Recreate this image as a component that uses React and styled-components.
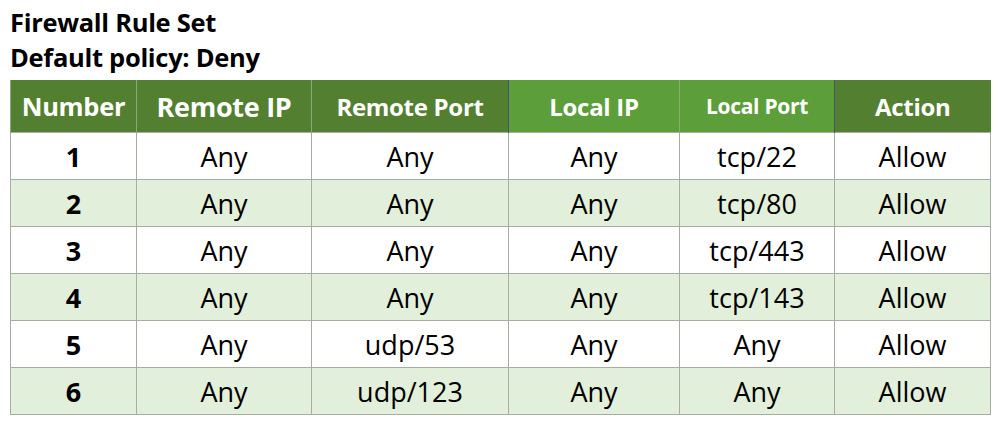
import React from 'react';
import styled, { createGlobalStyle } from 'styled-components';

const GlobalStyle = createGlobalStyle`
  body {
    margin: 0;
    background: #ffffff;
    font-family: "Open Sans", "Liberation Sans", sans-serif;
  }
`;

const Page = styled.div`
  width: 1000px;
  height: 425px;
  padding: 5px 10px 0 10px;
  box-sizing: border-box;
`;

const Title = styled.h1`
  margin: 0;
  font-size: 25.5px;
  line-height: 35px;
  font-weight: 700;
  color: #000;
  letter-spacing: -0.3px;
`;

const RuleTable = styled.table`
  margin-top: 5px;
  width: 980px;
  border-collapse: collapse;
  table-layout: fixed;
`;

const HeadCell = styled.th`
  height: 52px;
  padding: 0;
  background: ${(p) => (p.$light ? '#5c9e3a' : '#537f30')};
  color: #ffffff;
  font-size: ${(p) => p.$size || 23}px;
  font-weight: 700;
  letter-spacing: -0.3px;
  text-align: center;
  border-left: 1px solid ${(p) => p.$edge || '#8aa878'};
`;

const Row = styled.tr`
  background: ${(p) => (p.$alt ? '#e2efda' : '#ffffff')};
`;

const Cell = styled.td`
  height: 46px;
  padding: 0;
  font-size: 27px;
  font-weight: ${(p) => (p.$bold ? 700 : 400)};
  color: #000;
  text-align: center;
  border: 1px solid #a8ada4;
  border-left: 1px solid ${(p) => p.$edge || '#a8ada4'};
`;

const columns = [
  { label: 'Number', width: 126, size: 25.5 },
  { label: 'Remote IP', width: 175, size: 27 },
  { label: 'Remote Port', width: 197, size: 24 },
  { label: 'Local IP', width: 171, size: 24, light: true, edge: '#44546a' },
  { label: 'Local Port', width: 155, size: 21, light: true },
  { label: 'Action', width: 156, size: 24, edge: '#44546a' }
];

const rules = [
  ['1', 'Any', 'Any', 'Any', 'tcp/22', 'Allow'],
  ['2', 'Any', 'Any', 'Any', 'tcp/80', 'Allow'],
  ['3', 'Any', 'Any', 'Any', 'tcp/443', 'Allow'],
  ['4', 'Any', 'Any', 'Any', 'tcp/143', 'Allow'],
  ['5', 'Any', 'udp/53', 'Any', 'Any', 'Allow'],
  ['6', 'Any', 'udp/123', 'Any', 'Any', 'Allow']
];

const App = () => (
  <Page>
    <GlobalStyle />
    <Title>Firewall Rule Set</Title>
    <Title>Default policy: Deny</Title>
    <RuleTable>
      <colgroup>
        {columns.map((c) => (
          <col key={c.label} style={{ width: c.width }} />
        ))}
      </colgroup>
      <thead>
        <tr>
          {columns.map((c) => (
            <HeadCell key={c.label} $light={c.light} $size={c.size} $edge={c.edge}>
              {c.label}
            </HeadCell>
          ))}
        </tr>
      </thead>
      <tbody>
        {rules.map((r, i) => (
          <Row key={r[0]} $alt={i % 2 === 1}>
            {r.map((v, j) => (
              <Cell key={j} $bold={j === 0} $edge={columns[j].edge}>
                {v}
              </Cell>
            ))}
          </Row>
        ))}
      </tbody>
    </RuleTable>
  </Page>
);

export default App;
